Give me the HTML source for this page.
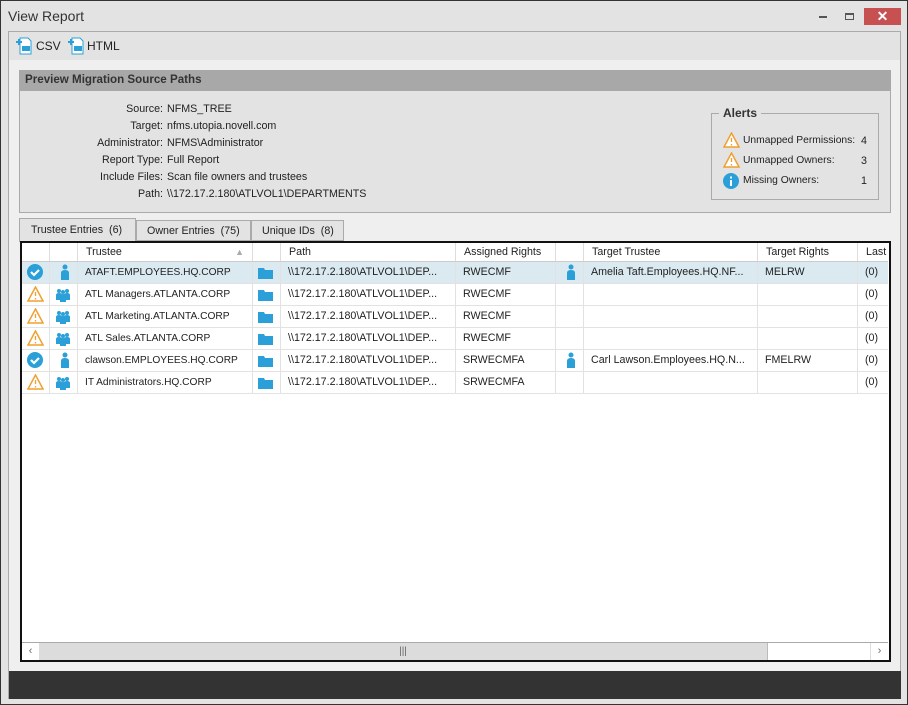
<!DOCTYPE html>
<html><head><meta charset="utf-8"><style>
*{box-sizing:border-box;margin:0;padding:0}
body{width:908px;height:705px;background:#e3e3e3;font-family:"Liberation Sans",sans-serif;font-size:10.7px;color:#222;position:relative;overflow:hidden;border:1px solid #333}
.a{position:absolute}
.lbl{position:absolute;text-align:right;width:160px;left:0}
.val{position:absolute;left:166px}
.hd{position:absolute;top:242px;height:19px;border-right:1px solid #ddd;padding-left:8px;line-height:19px;background:#fff;color:#222}
.row{position:absolute;left:21px;width:866px;height:22px;border-bottom:1px solid #e2e2e2}
.c{position:absolute;top:0;height:21px;line-height:21px;border-right:1px solid #e2e2e2;white-space:nowrap;overflow:hidden;padding-left:7px}
</style></head><body>
<div class="a" style="left:7px;top:7px;font-size:14px;color:#333">View Report</div>
<div class="a" style="left:818px;top:15px;width:8px;height:2px;background:#555"></div>
<div class="a" style="left:844px;top:12px;width:9px;height:7px;border:1px solid #555;border-top-width:2px"></div>
<div class="a" style="left:863px;top:7px;width:37px;height:17px;background:#c75050;color:#fff;text-align:center;font-size:14px;line-height:17px;font-weight:bold">✕</div>
<div class="a" style="left:7px;top:30px;width:893px;height:668px;border:1px solid #aaa;background:#efefef"></div>
<div class="a" style="left:8px;top:31px;width:891px;height:28px;background:#e3e3e3"></div>
<svg class="a" style="left:14px;top:36px" width="18" height="18"><path d="M5 1h8l3 3v13H5z" fill="#fff" stroke="#2a9fd8"/><rect x="7" y="9" width="8" height="5" fill="#2a9fd8"/><path d="M1 5h6M4 2v6" stroke="#2a9fd8" stroke-width="2"/></svg>
<div class="a" style="left:35px;top:38px;font-size:12px">CSV</div>
<svg class="a" style="left:66px;top:36px" width="18" height="18"><path d="M5 1h8l3 3v13H5z" fill="#fff" stroke="#2a9fd8"/><rect x="7" y="9" width="8" height="5" fill="#2a9fd8"/><path d="M1 5h6M4 2v6" stroke="#2a9fd8" stroke-width="2"/></svg>
<div class="a" style="left:86px;top:38px;font-size:12px">HTML</div>
<div class="a" style="left:18px;top:69px;width:872px;height:143px;border:1px solid #aaa;background:#e3e3e3"></div>
<div class="a" style="left:18px;top:69px;width:872px;height:21px;background:#a8a8a8;font-weight:bold;font-size:11.6px;padding-left:6px;line-height:20px;color:#333">Preview Migration Source Paths</div>
<div class="lbl" style="top:102px;width:162px">Source:</div><div class="val" style="top:102px">NFMS_TREE</div>
<div class="lbl" style="top:119px;width:162px">Target:</div><div class="val" style="top:119px">nfms.utopia.novell.com</div>
<div class="lbl" style="top:136px;width:162px">Administrator:</div><div class="val" style="top:136px">NFMS\Administrator</div>
<div class="lbl" style="top:153px;width:162px">Report Type:</div><div class="val" style="top:153px">Full Report</div>
<div class="lbl" style="top:170px;width:162px">Include Files:</div><div class="val" style="top:170px">Scan file owners and trustees</div>
<div class="lbl" style="top:187px;width:162px">Path:</div><div class="val" style="top:187px">\\172.17.2.180\ATLVOL1\DEPARTMENTS</div>
<div class="a" style="left:710px;top:112px;width:168px;height:87px;border:1px solid #aaa"></div>
<div class="a" style="left:718px;top:105px;background:#e3e3e3;padding:0 4px;font-weight:bold;font-size:12px;color:#333">Alerts</div>
<svg class="a" style="left:722px;top:131px" width="17" height="16"><path d="M8.5 1L16 15H1z" fill="#fff" stroke="#f0a030" stroke-width="1.5"/><path d="M8.5 6v4M8.5 12v1.5" stroke="#f0a030" stroke-width="1.3"/></svg>
<div class="a" style="left:742px;top:134px;font-size:10.3px">Unmapped Permissions:</div><div class="a" style="left:860px;top:134px">4</div>
<svg class="a" style="left:722px;top:151px" width="17" height="16"><path d="M8.5 1L16 15H1z" fill="#fff" stroke="#f0a030" stroke-width="1.5"/><path d="M8.5 6v4M8.5 12v1.5" stroke="#f0a030" stroke-width="1.3"/></svg>
<div class="a" style="left:742px;top:154px;font-size:10.3px">Unmapped Owners:</div><div class="a" style="left:860px;top:154px">3</div>
<svg class="a" style="left:722px;top:172px" width="16" height="16"><circle cx="8" cy="8" r="8" fill="#2a9fd8"/><path d="M8 7v6M8 3.5v2" stroke="#fff" stroke-width="2"/></svg>
<div class="a" style="left:742px;top:174px;font-size:10.3px">Missing Owners:</div><div class="a" style="left:860px;top:174px">1</div>
<div class="a" style="left:18px;top:217px;width:117px;height:24px;background:#e3e3e3;border:1px solid #aaa;border-bottom:none;padding:5px 0 0 11px">Trustee Entries&nbsp; (6)</div>
<div class="a" style="left:135px;top:219px;width:115px;height:21px;background:#e3e3e3;border:1px solid #aaa;padding:4px 0 0 10px">Owner Entries&nbsp; (75)</div>
<div class="a" style="left:250px;top:219px;width:93px;height:21px;background:#e3e3e3;border:1px solid #aaa;padding:4px 0 0 10px">Unique IDs&nbsp; (8)</div>
<div class="a" style="left:19px;top:240px;width:871px;height:421px;border:2px solid #111;background:#fff"></div>
<div class="hd" style="left:21px;width:28px"></div>
<div class="hd" style="left:49px;width:28px"></div>
<div class="hd" style="left:77px;width:175px">Trustee<span style="position:absolute;right:8px;top:0;color:#aaa;font-size:9px">▲</span></div>
<div class="hd" style="left:252px;width:28px"></div>
<div class="hd" style="left:280px;width:175px">Path</div>
<div class="hd" style="left:455px;width:100px">Assigned Rights</div>
<div class="hd" style="left:555px;width:28px"></div>
<div class="hd" style="left:583px;width:174px">Target Trustee</div>
<div class="hd" style="left:757px;width:100px">Target Rights</div>
<div class="hd" style="left:857px;width:30px;border:none">Last</div>
<div class="a" style="left:21px;top:260px;width:866px;height:1px;background:#ccc"></div>
<svg width="0" height="0" style="position:absolute"><defs>
<g id="ok"><circle cx="8" cy="8" r="8" fill="#2a9fd8"/><path d="M4 8l3 3 5-5" stroke="#fff" stroke-width="2.2" fill="none"/></g>
<g id="wa"><path d="M8.5 1L16 15H1z" fill="#fff" stroke="#f0a030" stroke-width="1.5"/><path d="M8.5 6v4M8.5 12v1.5" stroke="#f0a030" stroke-width="1.3"/></g>
<g id="us"><circle cx="8" cy="3" r="2.5" fill="#2a9fd8"/><path d="M4 16V9q0-3 4-3t4 3v7z" fill="#2a9fd8"/></g>
<g id="gr"><circle cx="4" cy="4" r="2" fill="#2a9fd8"/><circle cx="12" cy="4" r="2" fill="#2a9fd8"/><circle cx="8" cy="5" r="2" fill="#2a9fd8"/><path d="M1 13V8q0-2 3-2t3 2v5zM9 13V8q0-2 3-2t3 2v5zM5 15V9q0-2 3-2t3 2v6z" fill="#2a9fd8"/></g>
<g id="fo"><path d="M1 3h6l1 2h8v9H1z" fill="#2a9fd8"/></g>
</defs></svg>
<div class="row" style="top:261px;background:#daeaf0"><div class="c" style="left:0;width:28px"><svg width="17" height="17" style="margin:2px 0 0 -2px"><use href="#ok"/></svg></div><div class="c" style="left:28px;width:28px"><svg width="16" height="17" style="margin:2px 0 0 0"><use href="#us"/></svg></div><div class="c" style="left:56px;width:175px;font-size:10.2px">ATAFT.EMPLOYEES.HQ.CORP</div><div class="c" style="left:231px;width:28px"><svg width="17" height="16" style="margin:3px 0 0 -3px"><use href="#fo"/></svg></div><div class="c" style="left:259px;width:175px">\\172.17.2.180\ATLVOL1\DEP...</div><div class="c" style="left:434px;width:100px">RWECMF</div><div class="c" style="left:534px;width:28px"><svg width="16" height="17" style="margin:2px 0 0 0"><use href="#us"/></svg></div><div class="c" style="left:562px;width:174px">Amelia Taft.Employees.HQ.NF...</div><div class="c" style="left:736px;width:100px">MELRW</div><div class="c" style="left:836px;width:30px;border:none">(0)</div></div>
<div class="row" style="top:283px"><div class="c" style="left:0;width:28px"><svg width="17" height="17" style="margin:2px 0 0 -2px"><use href="#wa"/></svg></div><div class="c" style="left:28px;width:28px"><svg width="16" height="17" style="margin:3px 0 0 -2px"><use href="#gr"/></svg></div><div class="c" style="left:56px;width:175px;font-size:10.2px">ATL Managers.ATLANTA.CORP</div><div class="c" style="left:231px;width:28px"><svg width="17" height="16" style="margin:3px 0 0 -3px"><use href="#fo"/></svg></div><div class="c" style="left:259px;width:175px">\\172.17.2.180\ATLVOL1\DEP...</div><div class="c" style="left:434px;width:100px">RWECMF</div><div class="c" style="left:534px;width:28px"></div><div class="c" style="left:562px;width:174px"></div><div class="c" style="left:736px;width:100px"></div><div class="c" style="left:836px;width:30px;border:none">(0)</div></div>
<div class="row" style="top:305px"><div class="c" style="left:0;width:28px"><svg width="17" height="17" style="margin:2px 0 0 -2px"><use href="#wa"/></svg></div><div class="c" style="left:28px;width:28px"><svg width="16" height="17" style="margin:3px 0 0 -2px"><use href="#gr"/></svg></div><div class="c" style="left:56px;width:175px;font-size:10.2px">ATL Marketing.ATLANTA.CORP</div><div class="c" style="left:231px;width:28px"><svg width="17" height="16" style="margin:3px 0 0 -3px"><use href="#fo"/></svg></div><div class="c" style="left:259px;width:175px">\\172.17.2.180\ATLVOL1\DEP...</div><div class="c" style="left:434px;width:100px">RWECMF</div><div class="c" style="left:534px;width:28px"></div><div class="c" style="left:562px;width:174px"></div><div class="c" style="left:736px;width:100px"></div><div class="c" style="left:836px;width:30px;border:none">(0)</div></div>
<div class="row" style="top:327px"><div class="c" style="left:0;width:28px"><svg width="17" height="17" style="margin:2px 0 0 -2px"><use href="#wa"/></svg></div><div class="c" style="left:28px;width:28px"><svg width="16" height="17" style="margin:3px 0 0 -2px"><use href="#gr"/></svg></div><div class="c" style="left:56px;width:175px;font-size:10.2px">ATL Sales.ATLANTA.CORP</div><div class="c" style="left:231px;width:28px"><svg width="17" height="16" style="margin:3px 0 0 -3px"><use href="#fo"/></svg></div><div class="c" style="left:259px;width:175px">\\172.17.2.180\ATLVOL1\DEP...</div><div class="c" style="left:434px;width:100px">RWECMF</div><div class="c" style="left:534px;width:28px"></div><div class="c" style="left:562px;width:174px"></div><div class="c" style="left:736px;width:100px"></div><div class="c" style="left:836px;width:30px;border:none">(0)</div></div>
<div class="row" style="top:349px"><div class="c" style="left:0;width:28px"><svg width="17" height="17" style="margin:2px 0 0 -2px"><use href="#ok"/></svg></div><div class="c" style="left:28px;width:28px"><svg width="16" height="17" style="margin:2px 0 0 0"><use href="#us"/></svg></div><div class="c" style="left:56px;width:175px;font-size:10.2px">clawson.EMPLOYEES.HQ.CORP</div><div class="c" style="left:231px;width:28px"><svg width="17" height="16" style="margin:3px 0 0 -3px"><use href="#fo"/></svg></div><div class="c" style="left:259px;width:175px">\\172.17.2.180\ATLVOL1\DEP...</div><div class="c" style="left:434px;width:100px">SRWECMFA</div><div class="c" style="left:534px;width:28px"><svg width="16" height="17" style="margin:2px 0 0 0"><use href="#us"/></svg></div><div class="c" style="left:562px;width:174px">Carl Lawson.Employees.HQ.N...</div><div class="c" style="left:736px;width:100px">FMELRW</div><div class="c" style="left:836px;width:30px;border:none">(0)</div></div>
<div class="row" style="top:371px"><div class="c" style="left:0;width:28px"><svg width="17" height="17" style="margin:2px 0 0 -2px"><use href="#wa"/></svg></div><div class="c" style="left:28px;width:28px"><svg width="16" height="17" style="margin:3px 0 0 -2px"><use href="#gr"/></svg></div><div class="c" style="left:56px;width:175px;font-size:10.2px">IT Administrators.HQ.CORP</div><div class="c" style="left:231px;width:28px"><svg width="17" height="16" style="margin:3px 0 0 -3px"><use href="#fo"/></svg></div><div class="c" style="left:259px;width:175px">\\172.17.2.180\ATLVOL1\DEP...</div><div class="c" style="left:434px;width:100px">SRWECMFA</div><div class="c" style="left:534px;width:28px"></div><div class="c" style="left:562px;width:174px"></div><div class="c" style="left:736px;width:100px"></div><div class="c" style="left:836px;width:30px;border:none">(0)</div></div>
<div class="a" style="left:21px;top:641px;width:866px;height:18px;background:#fff;border-top:1px solid #aaa"></div>
<div class="a" style="left:21px;top:642px;width:17px;height:17px;text-align:center;color:#666;line-height:17px">‹</div>
<div class="a" style="left:38px;top:642px;width:729px;height:17px;background:#dcdcdc;border-right:1px solid #bbb;text-align:center;color:#666;line-height:17px;font-size:10px">|||</div>
<div class="a" style="left:869px;top:642px;width:18px;height:17px;border-left:1px solid #ddd;text-align:center;color:#666;line-height:17px">›</div>
<div class="a" style="left:8px;top:670px;width:892px;height:28px;background:#333"></div>
</body></html>
